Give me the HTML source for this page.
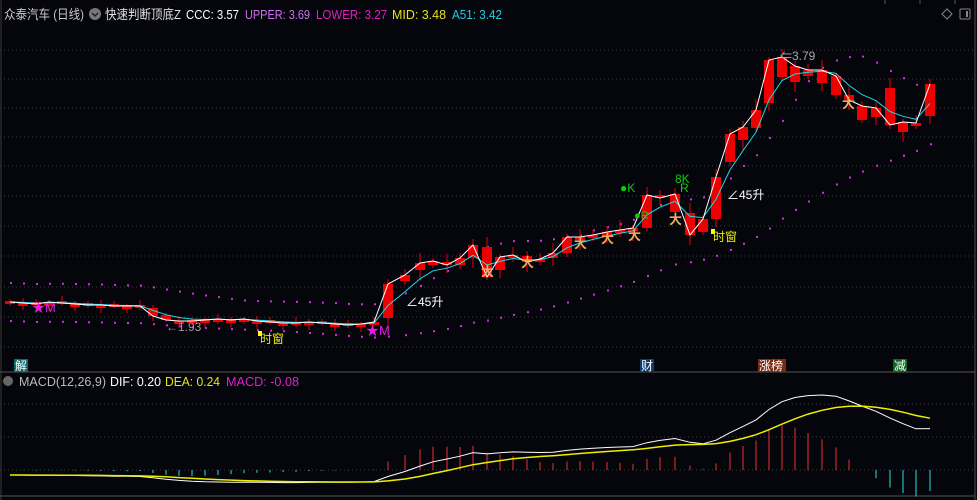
<!DOCTYPE html>
<html><head><meta charset="utf-8"><style>
html,body{margin:0;padding:0;background:#05050c;width:977px;height:500px;overflow:hidden}
svg{display:block}
text{font-family:"Liberation Sans","Noto Sans CJK SC",sans-serif}
</style></head><body>
<svg id="s" width="977" height="500" xmlns="http://www.w3.org/2000/svg">
<rect width="977" height="500" fill="#05050c"/>
<g id="grid"></g>
<line x1="975" y1="0" x2="975" y2="500" stroke="#4a4a4a"/>
<line x1="1" y1="0" x2="1" y2="500" stroke="#3a3a3a"/>
<line x1="0" y1="372" x2="975" y2="372" stroke="#555"/>
<line x1="0" y1="496" x2="975" y2="496" stroke="#555"/>
<line x1="885" y1="0" x2="885" y2="4" stroke="#555"/><line x1="920" y1="0" x2="920" y2="4" stroke="#555"/><line x1="955" y1="0" x2="955" y2="4" stroke="#555"/>
<g id="dots"></g>
<g id="candles"></g>
<polyline id="cy" fill="none" stroke="#22d8e8" stroke-width="1"/>
<polyline id="wh" fill="none" stroke="#fff" stroke-width="1"/>
<g id="macd"></g>
<text x="4" y="19" font-size="13" fill="#c8c8c8" textLength="80" lengthAdjust="spacingAndGlyphs">众泰汽车 (日线)</text>
<circle cx="95" cy="14" r="6" fill="#777"/><path d="M92 13l3 3 3-3" stroke="#222" fill="none" stroke-width="1.5"/>
<text x="105" y="19" font-size="13" fill="#e0e0e0" textLength="76" lengthAdjust="spacingAndGlyphs">快速判断顶底Z</text>
<text x="186" y="19" font-size="13" fill="#fff" textLength="53" lengthAdjust="spacingAndGlyphs">CCC: 3.57</text>
<text x="245" y="19" font-size="13" fill="#d070f0" textLength="65" lengthAdjust="spacingAndGlyphs">UPPER: 3.69</text>
<text x="316" y="19" font-size="13" fill="#e020c0" textLength="71" lengthAdjust="spacingAndGlyphs">LOWER: 3.27</text>
<text x="392" y="19" font-size="13" fill="#e8e020" textLength="54" lengthAdjust="spacingAndGlyphs">MID: 3.48</text>
<text x="452" y="19" font-size="13" fill="#20d0e0" textLength="50" lengthAdjust="spacingAndGlyphs">A51: 3.42</text>
<path d="M947 9l5 5-5 5-5-5z" fill="none" stroke="#888"/>
<rect x="960" y="9" width="10" height="10" fill="none" stroke="#888" rx="1"/><rect x="966" y="11" width="2" height="6" fill="#888"/>
<circle cx="8" cy="381" r="5" fill="#666"/>
<text x="19" y="386" font-size="13" fill="#bbb" textLength="87" lengthAdjust="spacingAndGlyphs">MACD(12,26,9)</text>
<text x="110" y="386" font-size="13" fill="#fff" textLength="51" lengthAdjust="spacingAndGlyphs">DIF: 0.20</text>
<text x="165" y="386" font-size="13" fill="#e8e020" textLength="55" lengthAdjust="spacingAndGlyphs">DEA: 0.24</text>
<text x="226" y="386" font-size="13" fill="#e020d0" textLength="73" lengthAdjust="spacingAndGlyphs">MACD: -0.08</text>
<rect x="14" y="359" width="14" height="13" fill="#0a6a70"/><text x="15" y="370" font-size="12" fill="#fff">解</text>
<rect x="640" y="359" width="14" height="13" fill="#0a3a70"/><text x="641" y="370" font-size="12" fill="#fff">财</text>
<rect x="758" y="359" width="28" height="13" fill="#7a2a10"/><text x="759" y="370" font-size="12" fill="#fff">涨榜</text>
<rect x="893" y="359" width="14" height="13" fill="#0a6a20"/><text x="894" y="370" font-size="12" fill="#fff">减</text>
<text x="32" y="312" font-size="13" fill="#e020e0">★M</text>
<text x="366" y="335" font-size="13" fill="#e020e0">★M</text>
<text x="166" y="331" font-size="12" fill="#999">←1.93</text>
<rect x="258" y="331" width="4" height="5" fill="#ff0"/><text x="260" y="343" font-size="12" fill="#ee0">时窗</text>
<rect x="711" y="229" width="4" height="5" fill="#ff0"/><text x="713" y="241" font-size="12" fill="#ee0">时窗</text>
<text x="406" y="306" font-size="12" fill="#fff">∠45升</text>
<text x="727" y="199" font-size="12" fill="#fff">∠45升</text>
<text x="780" y="60" font-size="12" fill="#aaa">⇐3.79</text>
<text x="620" y="192" font-size="12" fill="#1c1">●K</text>
<text x="675" y="183" font-size="12" fill="#1c1">8K</text><text x="680" y="192" font-size="12" fill="#1c1">R</text>
<text x="634" y="219" font-size="11" fill="#1c1">●R</text>
<g id="figs" font-size="13" font-weight="bold" fill="#f0a860"></g>
</svg>
<script>
var NS="http://www.w3.org/2000/svg";
function el(t,a,p){var e=document.createElementNS(NS,t);for(var k in a)e.setAttribute(k,a[k]);document.getElementById(p).appendChild(e);return e}
[50,79,108,137,166,196,226,256,287,317,347,404,437,470].forEach(function(y){el('line',{x1:0,x2:975,y1:y,y2:y,stroke:'#3a3a44','stroke-dasharray':'1 3'},'grid')});
var L=[302,303,304,302,303,304,305,305,306,306,306,316,320,321,321,320,319,320,319,321,322,323,323,322,323,324,325,324,322];
var D=[];var prev=302;
for(var i=0;i<L.length;i++){D.push([10+13*i,prev+(i%2?2:-1),L[i]]);prev=L[i]}
D=D.concat([[388,318,284],[405,281,275],[420,270,263],[433,265,261],[447,262,265],[460,265,258],[473,258,245],[487,247,277],[500,270,257],[513,258,255],[527,256,262],[540,262,259],[553,258,253],[567,253,237],[580,240,237],[593,237,235],[607,234,232],[620,232,230],[633,230,228],[647,228,195],[660,195,198],[675,212,194],[690,213,235],[703,232,219],[716,219,177],[730,162,134],[743,140,127],[756,128,110],[769,103,60],[782,77,57],[795,82,66],[808,76,70],[822,83,70],[836,95,76],[849,95,100],[862,120,106],[876,117,108],[890,88,125],[903,132,122],[916,125,123],[930,116,84]]);
var n=D.length,X=D.map(function(d){return d[0]}),C=D.map(function(d){return d[2]});
for(i=0;i<n;i++){
 var t=Math.min(D[i][1],D[i][2]),b=Math.max(D[i][1],D[i][2]);if(b-t<3){b=t+3}
 var w=i>28?[6,10,3,8,5][i%5]:[2,5,3][i%3];
 el('line',{x1:X[i],x2:X[i],y1:t-w,y2:b+[3,8,4,10][i%4]*(i>28?1:0.5),stroke:'#e00'},'candles');
 el('rect',{x:X[i]-5,y:t,width:10,height:b-t,fill:'#e00'},'candles');
}
document.getElementById('wh').setAttribute('points',C.map(function(c,i){return X[i]+','+c}).join(' '));
var cy=[],v=C[0];for(i=0;i<n;i++){v=v+(C[i]-v)*0.45;cy.push(v)}
document.getElementById('cy').setAttribute('points',cy.map(function(c,i){return X[i]+','+c.toFixed(1)}).join(' '));
function sma(a,p,i){var s=0,c=0;for(var j=Math.max(0,i-p+1);j<=i;j++){s+=a[j];c++}return s/c}
for(i=0;i<n;i++){
 var u=sma(C,8,i)-20,l=sma(C,22,i)+18;
 el('rect',{x:X[i],y:u,width:2,height:2,fill:'#d030e0'},'dots');
 el('rect',{x:X[i],y:l,width:2,height:2,fill:'#d030e0'},'dots');
}
[[487,276],[527,267],[580,248],[607,243],[634,240],[675,224],[848,108]].forEach(function(p){var t=el('text',{x:p[0]-6,y:p[1]},'figs');t.textContent='大'});
var P=C.map(function(c){return -c}),e12=P[0],e26=P[0],Df=[],E=[],dea=0;
for(i=0;i<n;i++){e12=e12+(P[i]-e12)*2/13;e26=e26+(P[i]-e26)*2/27;var d=e12-e26;Df.push(d);dea=dea+(d-dea)*0.2;E.push(dea)}
var mx=Math.max.apply(null,Df),sc=80/mx;
for(i=0;i<n;i++){var h=(Df[i]-E[i])*2*sc;el('line',{x1:X[i],x2:X[i],y1:470,y2:470-h,stroke:h>0?'#f03030':'#30e0e0'},'macd')}
el('polyline',{points:Df.map(function(d,i){return X[i]+','+(470-d*sc+5).toFixed(1)}).join(' '),fill:'none',stroke:'#fff'},'macd');
el('polyline',{points:E.map(function(d,i){return X[i]+','+(470-d*sc+5).toFixed(1)}).join(' '),fill:'none',stroke:'#ee0','stroke-width':1.5},'macd');
</script>
</body></html>
